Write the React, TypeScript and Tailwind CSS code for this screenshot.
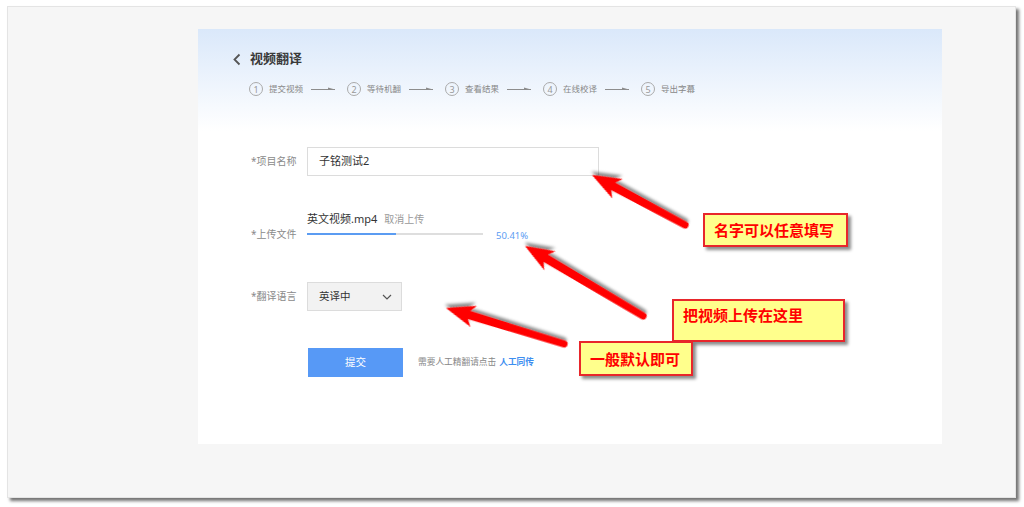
const cjk = { fontFamily: '"Noto Sans", "Noto Sans CJK SC", sans-serif' };

const steps = ["提交视频", "等待机翻", "查看结果", "在线校译", "导出字幕"];

function StepArrow() {
  return (
    <svg width="24" height="6" viewBox="0 0 24 6" className="mx-[8px] mr-[12px]">
      <line x1="0" y1="3.5" x2="24" y2="3.5" stroke="#8d8d8d" strokeWidth="1" />
      <polygon points="17,1.5 24,3.5 17,4" fill="#8d8d8d" />
    </svg>
  );
}

function Arrow({ x1, y1, x2, y2 }: { x1: number; y1: number; x2: number; y2: number }) {
  const len = Math.hypot(x2 - x1, y2 - y1);
  const ang = (Math.atan2(y2 - y1, x2 - x1) * 180) / Math.PI;
  const L = len;
  const d = `M0,-3.6 L${L - 24},-4.2 L${L - 29},-11 L${L},0 L${L - 29},11 L${L - 24},4.2 L0,3.6 A3.6,3.6 0 0 1 0,-3.6 Z`;
  return (
    <g transform={`translate(${x1} ${y1}) rotate(${ang})`} filter="url(#ash)">
      <path d={d} fill="#ff0000" />
    </g>
  );
}

function Note({ text, className }: { text: string; className: string }) {
  return (
    <div
      className={`absolute border-2 border-[#e8262b] bg-[#ffff8c] text-[15px] font-bold leading-[18px] text-[#ff0000] shadow-[3px_3px_3px_rgba(0,0,0,0.45)] ${className}`}
      style={cjk}
    >
      {text}
    </div>
  );
}

export default function App() {
  return (
    <div className="relative h-[507px] w-[1024px] overflow-hidden bg-white pl-[7px] pt-[6px]" style={cjk}>
      <div className="h-[492px] w-[1009px] border border-[#e4e4e4] bg-[#f6f6f6] pl-[190px] pt-[22px] shadow-[3px_3px_3px_rgba(0,0,0,0.55)]">
        <div className="flex h-[415px] w-[744px] flex-col bg-white">
          {/* header */}
          <div className="h-[102px] bg-gradient-to-b from-[#dae8fa] to-white pl-[34px] pt-[21px]">
            <div className="flex h-[18px] items-center">
              <svg width="10" height="13" viewBox="0 0 10 13">
                <path d="M7.5 1.5 L2.5 6.5 L7.5 11.5" fill="none" stroke="#555" strokeWidth="1.8" />
              </svg>
              <span className="ml-[8px] text-[13px] font-bold text-[#3a3a3a]">视频翻译</span>
            </div>
            <div className="mt-[14px] flex items-center pl-[17px]">
              {steps.map((s, i) => (
                <div key={s} className="flex items-center">
                  <div className="flex h-[14px] w-[14px] items-center justify-center rounded-full border border-[#aaa] text-[9px] leading-none text-[#999]">
                    {i + 1}
                  </div>
                  <span className="ml-[6px] text-[8.5px] leading-[12px] text-[#888]">{s}</span>
                  {i < steps.length - 1 && <StepArrow />}
                </div>
              ))}
            </div>
          </div>

          {/* form */}
          <div className="pl-[53px]">
            <div className="mt-[16px] flex items-center">
              <div className="w-[56px] text-[10px] text-[#8a8a8a]">*项目名称</div>
              <div className="flex h-[29px] w-[292px] items-center border border-[#dcdcdc] pl-[11px] text-[11px] text-[#333]">
                子铭测试2
              </div>
            </div>

            <div className="mt-[36px] flex">
              <div className="mt-[15px] w-[56px] text-[10px] leading-[14px] text-[#8a8a8a]">*上传文件</div>
              <div>
                <div className="flex h-[14px] items-center">
                  <span className="text-[11px] text-[#333]">英文视频.mp4</span>
                  <span className="ml-[7px] text-[10px] text-[#999]">取消上传</span>
                </div>
                <div className="flex h-[16px] items-center">
                  <div className="h-[2px] w-[176px] bg-[#dedede]">
                    <div className="h-[2px] w-[89px] bg-[#5b9cf2]" />
                  </div>
                  <span className="ml-[13px] mt-[4px] text-[9.5px] text-[#5b9cf2]">50.41%</span>
                </div>
              </div>
            </div>

            <div className="mt-[40px] flex items-center">
              <div className="w-[56px] text-[10px] text-[#8a8a8a]">*翻译语言</div>
              <div className="flex h-[29px] w-[95px] items-center justify-between border border-[#dcdcdc] bg-[#f2f2f2] pl-[11px] pr-[9px] text-[10.5px] text-[#333]">
                <span>英译中</span>
                <svg width="10" height="6" viewBox="0 0 10 6">
                  <path d="M1 1 L5 5 L9 1" fill="none" stroke="#555" strokeWidth="1.2" />
                </svg>
              </div>
            </div>

            <div className="mt-[37px] flex items-center pl-[57px]">
              <div className="flex h-[29px] w-[95px] items-center justify-center bg-[#5799f6] text-[10.5px] text-white">
                提交
              </div>
              <span className="ml-[15px] text-[8.7px] text-[#888]">需要人工精翻请点击</span>
              <span className="ml-[3px] text-[8.7px] font-bold text-[#3d8ef0]">人工同传</span>
            </div>
          </div>
        </div>
      </div>

      {/* annotations */}
      <svg className="pointer-events-none absolute left-0 top-0" width="1024" height="507">
        <defs>
          <filter id="ash" x="-20%" y="-50%" width="140%" height="200%">
            <feDropShadow dx="2" dy="3" stdDeviation="1.8" floodColor="#000" floodOpacity="0.45" />
          </filter>
        </defs>
        <Arrow x1={685} y1={225} x2={592} y2={175} />
        <Arrow x1={643} y1={316} x2={525} y2={246} />
        <Arrow x1={564} y1={344} x2={446} y2={308} />
      </svg>
      <Note text="名字可以任意填写" className="left-[703px] top-[213px] h-[34px] w-[145px] pl-[9px] pt-[6px]" />
      <Note text="把视频上传在这里" className="left-[672px] top-[299px] h-[43px] w-[173px] pl-[9px] pt-[5px]" />
      <Note text="一般默认即可" className="left-[579px] top-[341px] h-[35px] w-[114px] pl-[9px] pt-[7px]" />
    </div>
  );
}
